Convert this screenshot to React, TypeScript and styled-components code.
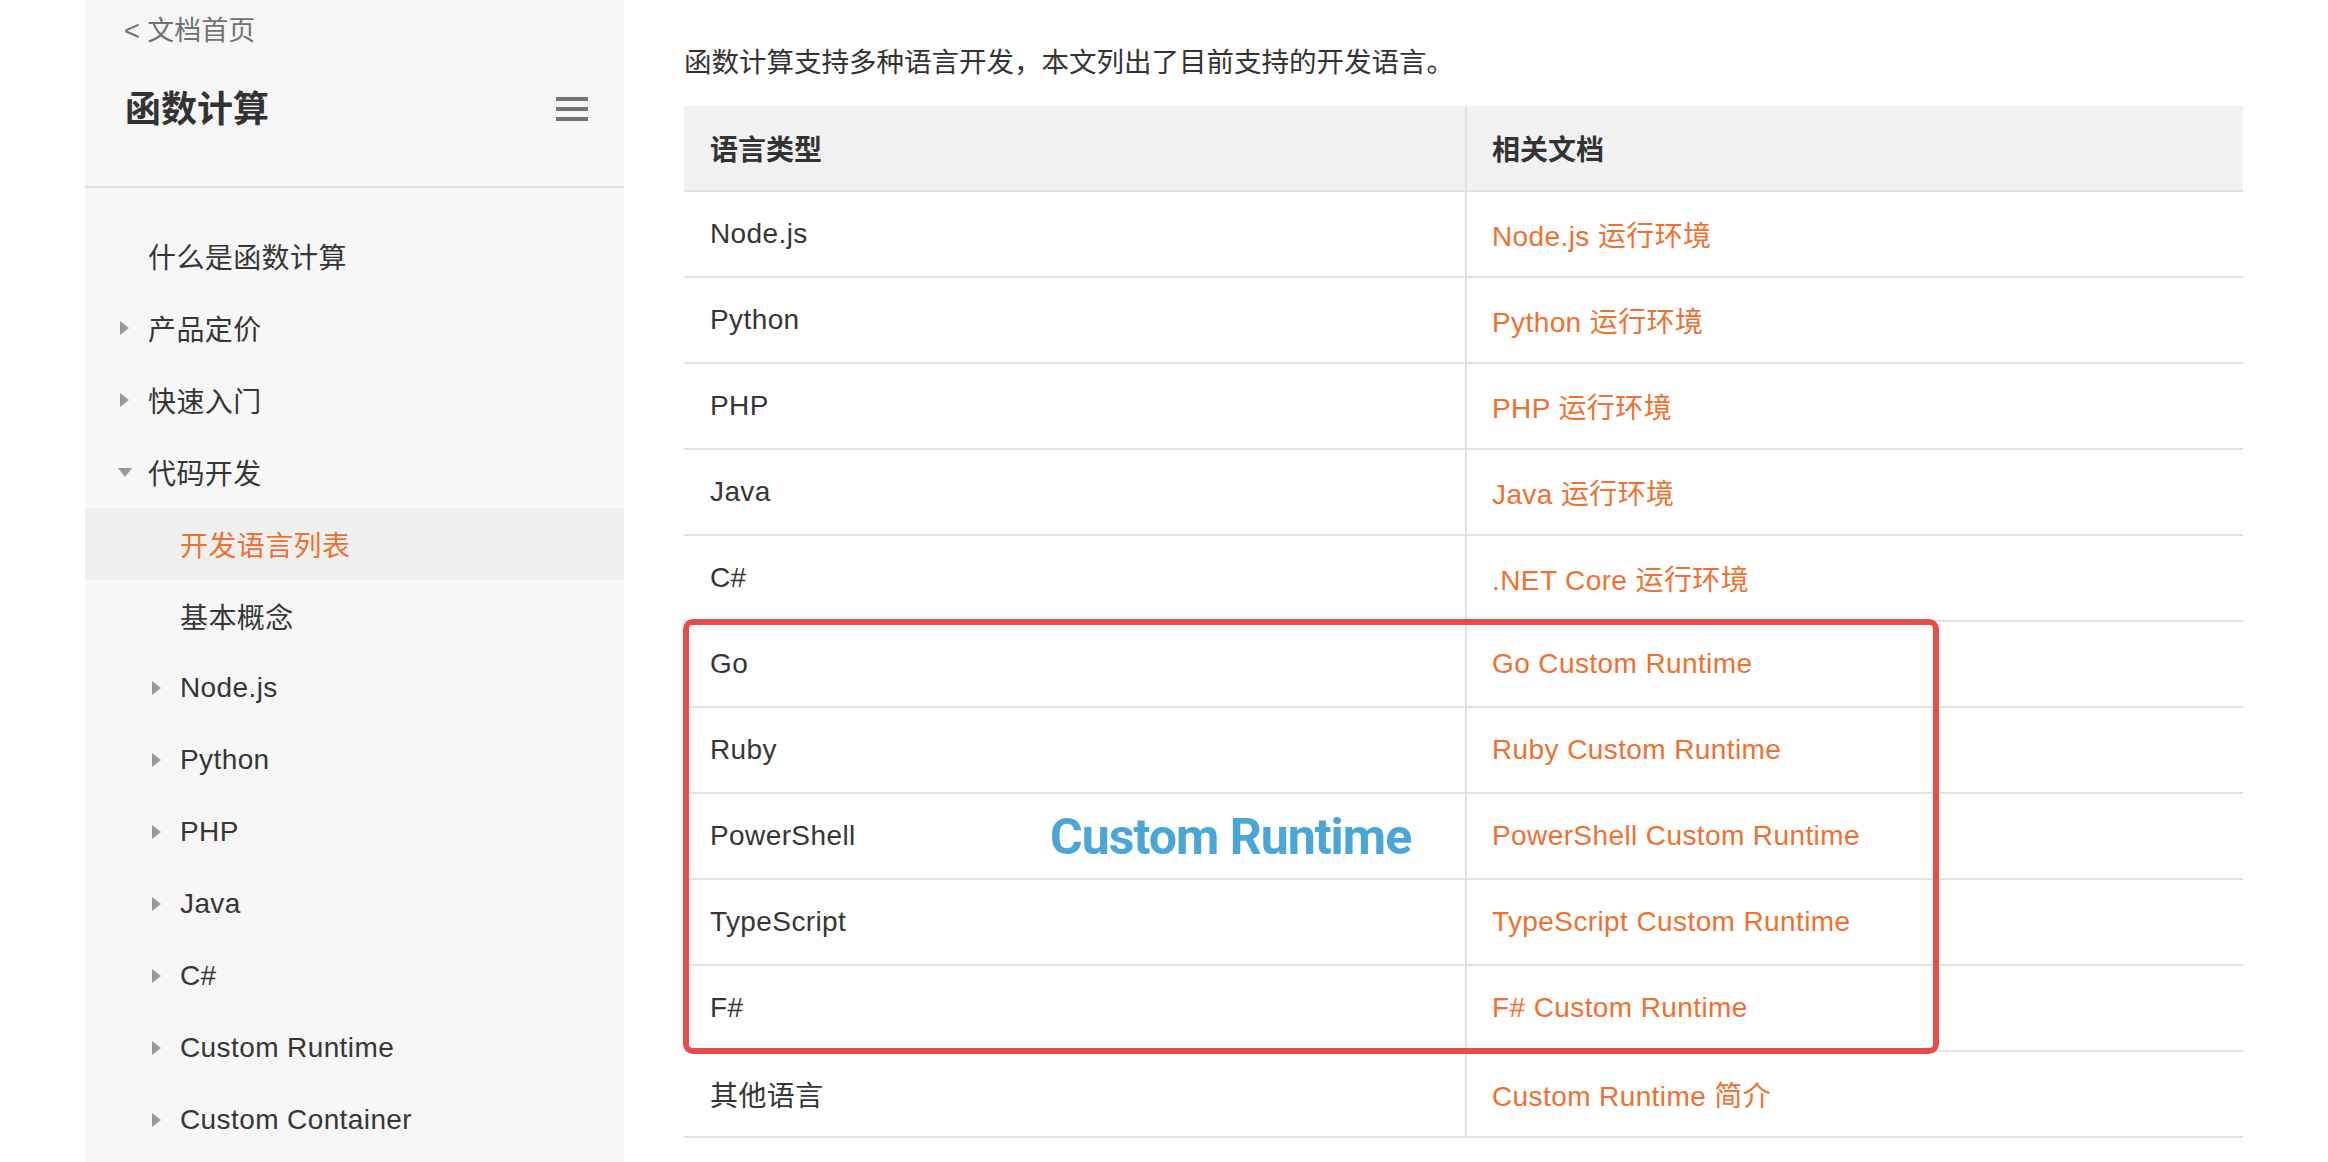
import React from "react";
import styled, { createGlobalStyle, css } from "styled-components";

const GlobalStyle = createGlobalStyle`
  html, body {
    margin: 0;
    padding: 0;
    background: #ffffff;
  }
  body {
    font-family: "Liberation Sans", "Noto Sans CJK SC", sans-serif;
    color: #333333;
  }
  * { box-sizing: border-box; }
`;

const Page = styled.div`
  display: flex;
  align-items: stretch;
  padding-left: 85px;
  min-height: 1162px;
`;

const Sidebar = styled.aside`
  width: 539px;
  flex-shrink: 0;
  background: #f7f7f7;
  min-height: 1162px;
`;

const BackLink = styled.div`
  height: 62px;
  line-height: 62px;
  padding-left: 39px;
  font-size: 27px;
  color: #727272;
`;

const TitleRow = styled.div`
  display: flex;
  align-items: center;
  justify-content: space-between;
  height: 126px;
  padding: 0 36px 30px 40px;
  border-bottom: 2px solid #e0e0e0;
`;

const Title = styled.h1`
  margin: 0;
  padding-bottom: 6px;
  font-size: 36px;
  line-height: 1;
  font-weight: 700;
  color: #333333;
  font-family: "Noto Sans CJK SC", sans-serif;
`;

const Menu = styled.nav`
  padding-top: 32px;
`;

const MenuItem = styled.div<{ $level: number; $active?: boolean }>`
  display: flex;
  align-items: center;
  gap: 16px;
  height: 72px;
  padding-left: ${(p) => (p.$level === 1 ? 32 : 64)}px;
  font-size: 28px;
  letter-spacing: 0.4px;
  color: ${(p) => (p.$active ? "#f07030" : "#363636")};
  background: ${(p) => (p.$active ? "#f0f0f0" : "transparent")};
`;

const ArrowSlot = styled.span`
  width: 15px;
  height: 15px;
  flex-shrink: 0;
  display: flex;
  align-items: center;
  justify-content: center;
`;

const Arrow = styled.span<{ $dir: "right" | "down" }>`
  width: 0;
  height: 0;
  ${(p) =>
    p.$dir === "right"
      ? css`
          border-left: 9px solid #9a9a9a;
          border-top: 7.5px solid transparent;
          border-bottom: 7.5px solid transparent;
        `
      : css`
          border-top: 9px solid #9a9a9a;
          border-left: 7.5px solid transparent;
          border-right: 7.5px solid transparent;
        `}
`;

const Main = styled.main`
  padding-left: 60px;
  width: 1619px;
  flex-shrink: 0;
`;

const Intro = styled.p`
  margin: 43px 0 23px;
  font-size: 27.5px;
  line-height: 40px;
  color: #333333;
`;

const TableWrap = styled.div`
  position: relative;
  width: 1559px;
`;

const Table = styled.table`
  width: 1559px;
  border-collapse: separate;
  border-spacing: 0;
  table-layout: fixed;
`;

const cellBase = css`
  height: 86px;
  padding: 0 0 0 26px;
  text-align: left;
  vertical-align: middle;
  font-size: 28px;
  letter-spacing: 0.4px;
  border-bottom: 2px solid #e2e2e2;
  &:first-child {
    border-right: 2px solid #e2e2e2;
  }
  &:last-child {
    padding-left: 25px;
  }
`;

const Th = styled.th`
  ${cellBase}
  background: #f2f2f2;
  font-weight: 700;
  color: #333333;
  font-family: "Noto Sans CJK SC", sans-serif;
  letter-spacing: 0;
`;

const Td = styled.td`
  ${cellBase}
  color: #363636;
`;

const DocLink = styled.a`
  color: #f07030;
  text-decoration: none;
`;

const HighlightBox = styled.div`
  position: absolute;
  left: -1px;
  top: 513px;
  width: 1256px;
  height: 435px;
  border: 6px solid #e94a4a;
  border-radius: 10px;
  pointer-events: none;
`;

const HighlightLabel = styled.div`
  position: absolute;
  left: 366px;
  top: 703px;
  font-family: Roboto, "Liberation Sans", sans-serif;
  font-weight: 700;
  font-size: 50px;
  line-height: 56px;
  letter-spacing: -1px;
  color: #4aa6d6;
  white-space: nowrap;
  pointer-events: none;
`;

const HamburgerIcon = () => (
  <svg width="32" height="24" viewBox="0 0 32 24" aria-hidden="true">
    <rect x="0" y="0" width="32" height="4" fill="#717375" />
    <rect x="0" y="10" width="32" height="4" fill="#717375" />
    <rect x="0" y="20" width="32" height="4" fill="#717375" />
  </svg>
);

type NavItem = {
  label: string;
  level: number;
  arrow?: "right" | "down";
  active?: boolean;
};

const navItems: NavItem[] = [
  { label: "什么是函数计算", level: 1 },
  { label: "产品定价", level: 1, arrow: "right" },
  { label: "快速入门", level: 1, arrow: "right" },
  { label: "代码开发", level: 1, arrow: "down" },
  { label: "开发语言列表", level: 2, active: true },
  { label: "基本概念", level: 2 },
  { label: "Node.js", level: 2, arrow: "right" },
  { label: "Python", level: 2, arrow: "right" },
  { label: "PHP", level: 2, arrow: "right" },
  { label: "Java", level: 2, arrow: "right" },
  { label: "C#", level: 2, arrow: "right" },
  { label: "Custom Runtime", level: 2, arrow: "right" },
  { label: "Custom Container", level: 2, arrow: "right" },
];

const rows: [string, string][] = [
  ["Node.js", "Node.js 运行环境"],
  ["Python", "Python 运行环境"],
  ["PHP", "PHP 运行环境"],
  ["Java", "Java 运行环境"],
  ["C#", ".NET Core 运行环境"],
  ["Go", "Go Custom Runtime"],
  ["Ruby", "Ruby Custom Runtime"],
  ["PowerShell", "PowerShell Custom Runtime"],
  ["TypeScript", "TypeScript Custom Runtime"],
  ["F#", "F# Custom Runtime"],
  ["其他语言", "Custom Runtime 简介"],
];

export default function App() {
  return (
    <>
      <GlobalStyle />
      <Page>
        <Sidebar>
          <BackLink>&lt; 文档首页</BackLink>
          <TitleRow>
            <Title>函数计算</Title>
            <HamburgerIcon />
          </TitleRow>
          <Menu>
            {navItems.map((item) => (
              <MenuItem key={item.label} $level={item.level} $active={item.active}>
                <ArrowSlot>{item.arrow && <Arrow $dir={item.arrow} />}</ArrowSlot>
                <span>{item.label}</span>
              </MenuItem>
            ))}
          </Menu>
        </Sidebar>
        <Main>
          <Intro>函数计算支持多种语言开发，本文列出了目前支持的开发语言。</Intro>
          <TableWrap>
            <Table>
              <colgroup>
                <col style={{ width: "783px" }} />
                <col style={{ width: "776px" }} />
              </colgroup>
              <thead>
                <tr>
                  <Th>语言类型</Th>
                  <Th>相关文档</Th>
                </tr>
              </thead>
              <tbody>
                {rows.map(([lang, doc]) => (
                  <tr key={lang}>
                    <Td>{lang}</Td>
                    <Td>
                      <DocLink href="#">{doc}</DocLink>
                    </Td>
                  </tr>
                ))}
              </tbody>
            </Table>
            <HighlightBox />
            <HighlightLabel>Custom Runtime</HighlightLabel>
          </TableWrap>
        </Main>
      </Page>
    </>
  );
}
